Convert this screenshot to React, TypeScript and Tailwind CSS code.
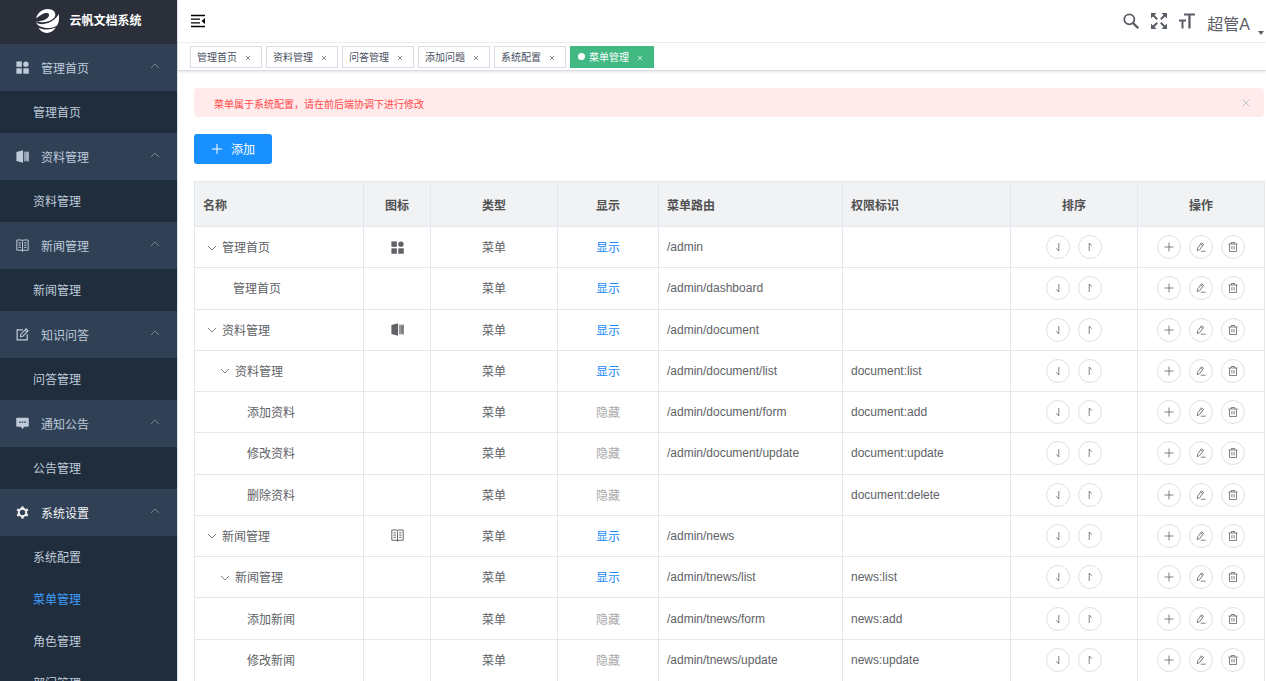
import { ReactNode } from "react";
import clsx from "clsx";

type IconName = "grid" | "office" | "book" | "edit" | "message" | "gear";

interface IconProps {
    name: IconName;
    className?: string;
}

interface MenuGroup {
    title: string;
    icon: IconName;
    children: string[];
}

interface MenuRow {
    name: string;
    level: 0 | 1 | 2;
    expandable?: boolean;
    icon?: IconName;
    visible: boolean;
    path: string;
    permission: string;
}

const groups: MenuGroup[] = [
    { title: "管理首页", icon: "grid", children: ["管理首页"] },
    { title: "资料管理", icon: "office", children: ["资料管理"] },
    { title: "新闻管理", icon: "book", children: ["新闻管理"] },
    { title: "知识问答", icon: "edit", children: ["问答管理"] },
    { title: "通知公告", icon: "message", children: ["公告管理"] },
    { title: "系统设置", icon: "gear", children: ["系统配置", "菜单管理", "角色管理", "部门管理"] },
];

const tags = ["管理首页", "资料管理", "问答管理", "添加问题", "系统配置", "菜单管理"];

const rows: MenuRow[] = [
    { name: "管理首页", level: 0, expandable: true, icon: "grid", visible: true, path: "/admin", permission: "" },
    { name: "管理首页", level: 1, visible: true, path: "/admin/dashboard", permission: "" },
    { name: "资料管理", level: 0, expandable: true, icon: "office", visible: true, path: "/admin/document", permission: "" },
    { name: "资料管理", level: 1, expandable: true, visible: true, path: "/admin/document/list", permission: "document:list" },
    { name: "添加资料", level: 2, visible: false, path: "/admin/document/form", permission: "document:add" },
    { name: "修改资料", level: 2, visible: false, path: "/admin/document/update", permission: "document:update" },
    { name: "删除资料", level: 2, visible: false, path: "", permission: "document:delete" },
    { name: "新闻管理", level: 0, expandable: true, icon: "book", visible: true, path: "/admin/news", permission: "" },
    { name: "新闻管理", level: 1, expandable: true, visible: true, path: "/admin/tnews/list", permission: "news:list" },
    { name: "添加新闻", level: 2, visible: false, path: "/admin/tnews/form", permission: "news:add" },
    { name: "修改新闻", level: 2, visible: false, path: "/admin/tnews/update", permission: "news:update" },
];

const columns = [
    { title: "名称", width: "w-[169px]", center: false },
    { title: "图标", width: "w-[67px]", center: true },
    { title: "类型", width: "w-[127px]", center: true },
    { title: "显示", width: "w-[101px]", center: true },
    { title: "菜单路由", width: "w-[184px]", center: false },
    { title: "权限标识", width: "w-[168px]", center: false },
    { title: "排序", width: "w-[127px]", center: true },
    { title: "操作", width: "w-[127px]", center: true },
];

const indents = ["pl-0", "pl-[13px]", "pl-[27px]"];

const Icon = ({ name, className }: IconProps) => {
    return (
        <svg viewBox="0 0 16 16" className={clsx("shrink-0", className)} fill="none" stroke="currentColor" strokeWidth="1.2">
            {name === "grid" && (
                <g fill="currentColor" stroke="none">
                    <rect x="0.500" y="0.500" width="6.700" height="6.700" />
                    <circle cx="12.200" cy="3.900" r="3.300" />
                    <rect x="0.500" y="9" width="6.700" height="6.700" />
                    <rect x="9" y="9" width="6.700" height="6.700" />
                </g>
            )}
            {name === "office" && (
                <g fill="currentColor" stroke="none">
                    <path d="M.5 2.400 8.600.400v15.200l-8.100-2z" />
                    <path opacity="0.650" d="M9.600 2h5.900v12H9.600z" />
                    <path d="M12.200 4.200h3.300v1.200h-3.300zM12.200 7.200h3.300v1.200h-3.300zM12.200 10.200h3.300v1.200h-3.300zM14.600 2h.9v12h-.9z" />
                </g>
            )}
            {name === "book" && (
                <>
                    <path d="M1 1.200h5.200Q8 1.200 8 2.600q0-1.400 1.800-1.400H15v12.600H9.800Q8 13.800 8 15.200q0-1.400-1.800-1.400H1zM8 3v12" />
                    <path d="M3 4.700h3M3 7.500h3M3 10.300h3M10 4.700h3M10 7.500h3M10 10.300h3" />
                </>
            )}
            {name === "edit" && (
                <>
                    <path strokeWidth="1.500" d="M8.500 2.200H1.400v12.400h12.400V7.600" />
                    <path strokeWidth="1.300" d="m5.500 10.700.5-3L12.500 1l2.400 2.400-6.500 6.700zM11 2.600 13.400 5" />
                </>
            )}
            {name === "message" && (
                <path
                    fill="currentColor"
                    stroke="none"
                    fillRule="evenodd"
                    d="M1.600 1h12.800a1.300 1.300 0 0 1 1.300 1.300v8.400a1.300 1.300 0 0 1-1.300 1.300H10l-2 3-2-3H1.600A1.300 1.300 0 0 1 .3 10.700V2.300A1.300 1.300 0 0 1 1.600 1zM4 5.600v1.800h1.800V5.600zm3.100 0v1.800h1.800V5.600zm3.100 0v1.800H12V5.600z"
                />
            )}
            {name === "gear" && (
                <>
                    <circle cx="8" cy="8" r="4.600" strokeWidth="2.500" />
                    <path
                        strokeWidth="3"
                        d="M12.800 10.800l1.700 1M12.800 5.200l1.700-1M8 13.300v2M8 2.700v-2M3.200 10.800l-1.700 1M3.200 5.200l-1.700-1"
                    />
                </>
            )}
        </svg>
    );
};

const Logo = () => {
    return (
        <svg viewBox="0 0 24 24" className="size-6 shrink-0" fill="#fff">
            <path d="M1 9.500C2.500 3.500 7.500 0 12.500 0c5.500 0 8.300 3 7.800 6.200C19.600 10 14 13 8 13.200c-3 .1-5.300-.4-7-1.200 2.500.4 6 0 8.700-1.300 3.400-1.600 5-4 4.200-5.500-.9-1.700-4.700-1.300-7.600.6C4.300 7 2.300 8.400 1 9.500z" />
            <path d="M1 13.600c3 1.900 7.500 2.100 12 .5 4.700-1.700 8.300-5 11-9.100.1 5.500-.1 9-2 11.400-3.600 2.200-8 3-12.300 2.400-4-.5-7.400-2.500-8.700-5.200z" />
            <path d="M3.500 18.800c4.600 2.400 11.500 2.400 17.300-.2-2 3.400-5.300 5.400-9 5.400-3.500 0-6.600-2-8.300-5.200z" />
        </svg>
    );
};

const Arrow = ({ up, className }: { up?: boolean; className?: string }) => {
    return (
        <svg viewBox="0 0 10 10" className={clsx("size-[10px]", className)} fill="none" stroke="currentColor" strokeWidth="0.8">
            <path d={up ? "M1 7l4-4 4 4" : "M1 3l4 4 4-4"} />
        </svg>
    );
};

const CircleButton = ({ label, children }: { label: string; children: ReactNode }) => {
    return (
        <button type="button" aria-label={label} className="flex size-6 items-center justify-center rounded-full border border-[#dcdfe6] bg-white text-[#606266]">
            <svg viewBox="0 0 12 12" className="size-3" fill="none" stroke="currentColor" strokeWidth="0.8">
                {children}
            </svg>
        </button>
    );
};

const Sidebar = () => {
    return (
        <aside className="h-screen w-[177px] shrink-0 overflow-hidden bg-[#1f2d3d] text-xs text-[#bfcbd9]">
            <a href="#" className="flex h-11 items-center justify-center gap-[10px] bg-[#2b2f3a] pb-[2px] font-bold text-white">
                <Logo />
                云帆文档系统
            </a>
            <nav>
                {groups.map((group) => (
                    <div key={group.title}>
                        <button
                            type="button"
                            className={clsx("flex h-[47px] w-full items-center bg-[#304156] pr-[17px] pl-4", group.icon === "gear" && "text-[#f4f4f5]")}
                        >
                            <Icon name={group.icon} className="mr-3 size-[13px]" />
                            <span className="pt-[2px]">{group.title}</span>
                            <Arrow up className="mb-1 ml-auto text-[#909399]" />
                        </button>
                        <ul>
                            {group.children.map((child) => (
                                <li key={child}>
                                    <a href="#" className={clsx("flex h-[42px] items-center pt-[2px] pl-[33px]", child === "菜单管理" && "text-[#409eff]")}>
                                        {child}
                                    </a>
                                </li>
                            ))}
                        </ul>
                    </div>
                ))}
            </nav>
        </aside>
    );
};

const Navbar = () => {
    return (
        <header className="flex h-[43px] shrink-0 items-center border-b border-[#f0f1f3] pr-[2px] pl-[13px] text-[#5a5e66]">
            <button type="button" aria-label="收起菜单" className="text-black">
                <svg viewBox="0 0 14 14" className="size-[14px]" fill="none" stroke="currentColor" strokeWidth="1.300">
                    <path d="M0 1.500h14M0 5.200h9M0 8.800h9M0 12.500h14" />
                    <path fill="currentColor" stroke="none" d="M14 4v6l-3.500-3z" />
                </svg>
            </button>
            <div className="ml-auto flex items-center gap-3">
                <button type="button" aria-label="搜索">
                    <svg viewBox="0 0 16 16" className="size-4" fill="none" stroke="currentColor">
                        <circle cx="6.300" cy="6.300" r="5" strokeWidth="1.800" />
                        <path strokeWidth="2.400" d="m10 10 5.200 5.200" />
                    </svg>
                </button>
                <button type="button" aria-label="全屏">
                    <svg viewBox="0 0 16 16" className="size-4" fill="currentColor" stroke="currentColor">
                        <path strokeWidth="2" d="m2 2 4.200 4.200M14 2 9.800 6.200M2 14l4.200-4.200M14 14 9.800 9.800" />
                        <path stroke="none" d="M0 0h5.500L0 5.500zM16 0v5.500L10.500 0zM0 16v-5.500L5.500 16zM16 16h-5.500l5.500-5.500z" />
                    </svg>
                </button>
                <button type="button" aria-label="字号">
                    <svg viewBox="0 0 16 16" className="size-4" fill="currentColor">
                        <path d="M5 .5h11v2h-4.400v13H9.300v-13H5zM0 6.500h7v1.900H4.500v7.100h-2V8.400H0z" />
                    </svg>
                </button>
                <button type="button" className="flex items-end gap-2 pt-2 text-base leading-5">
                    超管A
                    <svg viewBox="0 0 6 4" className="h-1 w-[6px]" fill="currentColor">
                        <path d="M0 0h6L3 4z" />
                    </svg>
                </button>
            </div>
        </header>
    );
};

const TagsView = () => {
    return (
        <div className="flex h-7 shrink-0 items-center gap-1 border-b border-[#d8dce5] pl-3 text-[10px] shadow-[0_1px_3px_0_rgba(0,0,0,0.12)]">
            {tags.map((tag) => {
                const active = tag === "菜单管理";
                return (
                    <div
                        key={tag}
                        className={clsx(
                            "flex h-[22px] items-center border px-[6px]",
                            active ? "border-[#42b983] bg-[#42b983] text-white" : "border-[#d8dce5] bg-white text-[#495060]"
                        )}
                    >
                        {active && <span className="mr-1 ml-px size-[7px] rounded-full bg-white" />}
                        <a href="#" className="pt-px">
                            {tag}
                        </a>
                        <button type="button" aria-label={`关闭${tag}`} className="ml-2 pr-1">
                            <svg viewBox="0 0 6 6" className="mt-[2px] size-[6px]" fill="none" stroke="currentColor" strokeWidth="0.7">
                                <path d="m1 1 4 4M5 1 1 5" />
                            </svg>
                        </button>
                    </div>
                );
            })}
        </div>
    );
};

const MenuTable = () => {
    return (
        <table className="h-full w-full table-fixed border-separate border-spacing-0 border-t border-l border-[#e2e8ee] text-xs text-[#606266]">
            <colgroup>
                {columns.map((column) => (
                    <col key={column.title} className={column.width} />
                ))}
            </colgroup>
            <thead>
                <tr className="h-[45px] bg-[#f0f2f4] text-[#515151]">
                    {columns.map((column) => (
                        <th
                            key={column.title}
                            className={clsx("border-r border-b border-[#e2e8ee] px-2 pt-[3px] font-bold", column.center ? "text-center" : "text-left")}
                        >
                            {column.title}
                        </th>
                    ))}
                </tr>
            </thead>
            <tbody>
                {rows.map((row, index) => (
                    <tr key={index} className="h-[41px] *:border-r *:border-b *:border-[#e2e8ee] *:px-2 last:*:border-b-0">
                        <td>
                            <div className={clsx("flex items-center", indents[row.level])}>
                                {row.expandable ? (
                                    <button type="button" aria-label="展开" className="flex w-[19px] pt-px pl-1 text-[#606266]">
                                        <Arrow />
                                    </button>
                                ) : (
                                    <span className="w-[17px]" />
                                )}
                                <span className="pt-[2px]">{row.name}</span>
                            </div>
                        </td>
                        <td>{row.icon && <Icon name={row.icon} className="mx-auto size-[13px]" />}</td>
                        <td className="pt-[2px] text-center">菜单</td>
                        <td className={clsx("pt-[2px] text-center", row.visible ? "text-[#1989fa]" : "text-[#aaaaaa]")}>{row.visible ? "显示" : "隐藏"}</td>
                        <td>{row.path}</td>
                        <td>{row.permission}</td>
                        <td>
                            <div className="flex justify-center gap-2">
                                <CircleButton label="下移">
                                    <path d="M6.800 2v8L4.300 7.300" />
                                </CircleButton>
                                <CircleButton label="上移">
                                    <path d="M5.200 10V2l2.500 2.700" />
                                </CircleButton>
                            </div>
                        </td>
                        <td>
                            <div className="flex justify-center gap-2">
                                <CircleButton label="添加">
                                    <path d="M6 1.500v9M1.500 6h9" />
                                </CircleButton>
                                <CircleButton label="修改">
                                    <path d="M2.200 9.600 2.700 7 6.500 1.800 8.600 3.300 4.800 8.500zM5.600 3l2.100 1.500M5.800 10.200h4.800" />
                                </CircleButton>
                                <CircleButton label="删除">
                                    <path d="M1.500 3h9M4.300 3V1.500h3.400V3M2.500 3v7.500h7V3M4.900 5v3.500M7.100 5v3.500" />
                                </CircleButton>
                            </div>
                        </td>
                    </tr>
                ))}
            </tbody>
        </table>
    );
};

const App = () => {
    return (
        <div className="flex h-screen overflow-hidden bg-white font-['Liberation_Sans','Noto_Sans_CJK_SC',sans-serif]">
            <Sidebar />
            <div className="flex min-w-0 flex-1 flex-col border-l border-[#dcdfe6]">
                <Navbar />
                <TagsView />
                <main className="flex min-h-0 flex-1 flex-col items-start gap-[17px] pt-[17px] pr-[2px] pl-4">
                    <div role="alert" className="flex h-[29px] w-full shrink-0 items-center justify-between rounded bg-[#ffebeb] pr-[13px] pl-5 text-[10px] text-[#ff4949]">
                        <span className="pt-1">菜单属于系统配置，请在前后端协调下进行修改</span>
                        <button type="button" aria-label="关闭" className="text-[#c0c4cc]">
                            <svg viewBox="0 0 10 10" className="size-[10px]" fill="none" stroke="currentColor">
                                <path d="m1.500 1.500 7 7M8.500 1.500l-7 7" />
                            </svg>
                        </button>
                    </div>
                    <button type="button" className="flex h-[30px] shrink-0 items-center gap-2 rounded-[3px] bg-[#1890ff] px-[17px] text-xs text-white">
                        <svg viewBox="0 0 12 12" className="size-3" fill="none" stroke="currentColor">
                            <path d="M6 1v10M1 6h10" />
                        </svg>
                        <span className="pt-[2px]">添加</span>
                    </button>
                    <div className="min-h-0 w-full flex-1">
                        <MenuTable />
                    </div>
                </main>
            </div>
        </div>
    );
};

export default App;
